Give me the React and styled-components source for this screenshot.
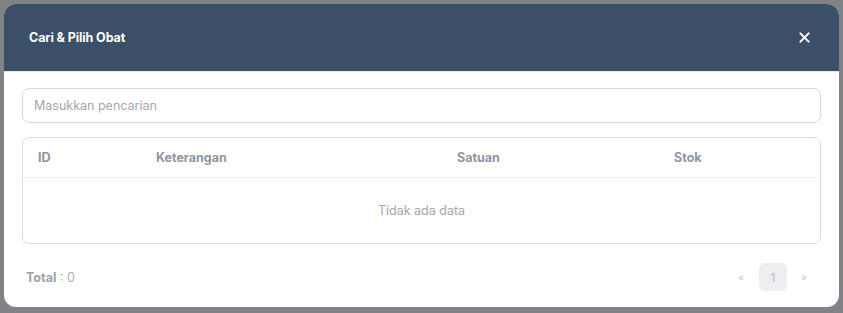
import React from 'react';
import styled, { createGlobalStyle } from 'styled-components';

const GlobalStyle = createGlobalStyle`
	html, body {
		margin: 0;
		padding: 0;
		background: #808285;
		font-family: 'Inter', 'Noto Sans', sans-serif;
	}
	* {
		box-sizing: border-box;
	}
`;

const Backdrop = styled.div`
	width: 843px;
	height: 313px;
	padding: 4px;
	background: #808285;
`;

const Modal = styled.div`
	width: 835px;
	height: 303px;
	background: #ffffff;
	border-radius: 12px;
	overflow: hidden;
	display: flex;
	flex-direction: column;
`;

const Header = styled.div`
	height: 68px;
	background: #3b5068;
	display: flex;
	align-items: center;
	justify-content: space-between;
	padding: 0 25px;
	border-bottom: 1px solid #e5e7eb;
`;

const Title = styled.h3`
	margin: 0;
	color: #ffffff;
	font-size: 12.5px;
	font-weight: 700;
	letter-spacing: -0.1px;
`;

const CloseButton = styled.button`
	border: none;
	background: transparent;
	padding: 0;
	width: 20px;
	height: 20px;
	display: flex;
	align-items: center;
	justify-content: center;
	cursor: pointer;
`;

const Body = styled.div`
	flex: 1;
	padding: 16px 18px 16px;
	display: flex;
	flex-direction: column;
`;

const SearchInput = styled.input`
	width: 100%;
	height: 35px;
	border: 1px solid #d4d7dc;
	border-radius: 7px;
	padding: 0 11px;
	font-family: inherit;
	font-size: 12.5px;
	color: #374151;
	outline: none;
	&::placeholder {
		color: #a1a7b1;
	}
`;

const Table = styled.div`
	margin-top: 14px;
	border: 1px solid #d9dce1;
	border-radius: 7px;
	height: 107px;
	display: flex;
	flex-direction: column;
`;

const HeadRow = styled.div`
	display: grid;
	grid-template-columns: 118px 301px 217px 1fr;
	height: 40px;
	align-items: center;
	border-bottom: 1px solid #f1f2f4;
`;

const HeadCell = styled.div`
	padding: 0 15px;
	font-size: 12.5px;
	font-weight: 700;
	color: #8e96a4;
`;

const EmptyRow = styled.div`
	flex: 1;
	display: flex;
	align-items: center;
	justify-content: center;
	font-size: 12.5px;
	color: #a1a7b1;
	padding-bottom: 1px;
`;

const Footer = styled.div`
	margin-top: 19px;
	display: flex;
	align-items: center;
	justify-content: space-between;
	padding-left: 4px;
`;

const Total = styled.div`
	font-size: 12.5px;
	color: #a8aeb8;
	b {
		font-weight: 700;
		color: #9aa2b0;
	}
`;

const Pagination = styled.div`
	display: flex;
	align-items: center;
`;

const PageArrow = styled.span`
	width: ${(p) => p.$width}px;
	text-align: center;
	font-size: 10px;
	color: #c9cdd3;
`;

const PageNumber = styled.span`
	width: 28px;
	height: 28px;
	border-radius: 6px;
	background: #eceef1;
	display: flex;
	align-items: center;
	justify-content: center;
	font-size: 12px;
	color: #b3b8c0;
`;

const columns = ['ID', 'Keterangan', 'Satuan', 'Stok'];

const App = () => {
	return (
		<>
			<GlobalStyle />
			<Backdrop>
				<Modal>
					<Header>
						<Title>Cari &amp; Pilih Obat</Title>
						<CloseButton aria-label="Tutup">
							<svg width="11" height="11" viewBox="0 0 12 12">
								<path d="M1.5 1.5 L10.5 10.5 M10.5 1.5 L1.5 10.5" stroke="#ffffff" strokeWidth="2.2" strokeLinecap="round" />
							</svg>
						</CloseButton>
					</Header>
					<Body>
						<SearchInput placeholder="Masukkan pencarian" />
						<Table>
							<HeadRow>
								{columns.map((c) => (
									<HeadCell key={c}>{c}</HeadCell>
								))}
							</HeadRow>
							<EmptyRow>Tidak ada data</EmptyRow>
						</Table>
						<Footer>
							<Total>
								<b>Total</b> : 0
							</Total>
							<Pagination>
								<PageArrow $width={36}>«</PageArrow>
								<PageNumber>1</PageNumber>
								<PageArrow $width={34}>»</PageArrow>
							</Pagination>
						</Footer>
					</Body>
				</Modal>
			</Backdrop>
		</>
	);
};

export default App;
